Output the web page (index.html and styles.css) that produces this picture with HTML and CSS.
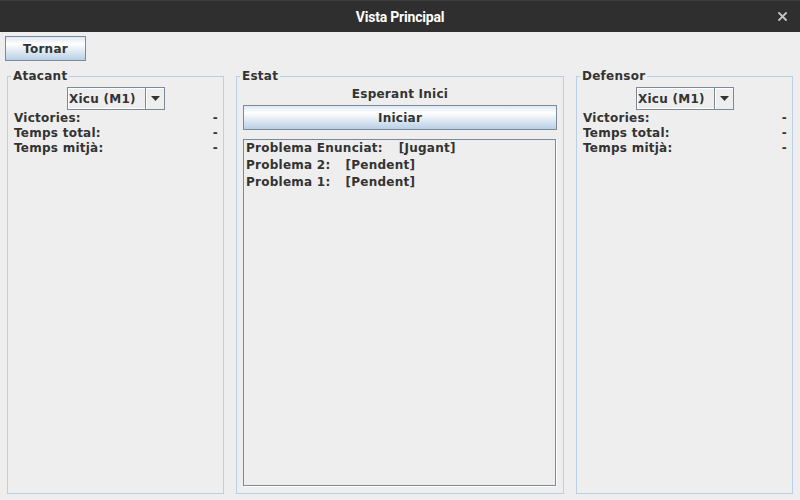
FILE: index.html
```html
<!DOCTYPE html>
<html lang="ca">
<head>
<meta charset="utf-8">
<title>Vista Principal</title>
<link rel="stylesheet" href="styles.css">
</head>
<body>
<div class="window">
  <div class="titlebar">
    <span class="title">Vista Principal</span>
    <span class="close" aria-label="Tancar">
      <svg width="9" height="9" viewBox="0 0 9 9"><path d="M1 1 L8 8 M8 1 L1 8" stroke="#c4c4c4" stroke-width="1.9" stroke-linecap="square" fill="none"/></svg>
    </span>
  </div>
  <div class="main">
    <div class="toolbar">
      <button class="btn btn-back">Tornar</button>
    </div>
    <div class="panels">
      <fieldset class="panel side">
        <legend>Atacant</legend>
        <div class="combo-row">
          <div class="combo">
            <span class="combo-text">Xicu (M1)</span>
            <span class="combo-arrow"><svg width="9" height="5" viewBox="0 0 9 5"><path d="M0 0 H9 L4.5 5 Z" fill="#333"/></svg></span>
          </div>
        </div>
        <div class="stats">
          <div class="stat"><span>Victories:</span><span>-</span></div>
          <div class="stat"><span>Temps total:</span><span>-</span></div>
          <div class="stat"><span>Temps mitjà:</span><span>-</span></div>
        </div>
      </fieldset>
      <fieldset class="panel center">
        <legend>Estat</legend>
        <div class="state">Esperant Inici</div>
        <button class="btn btn-start">Iniciar</button>
        <div class="list">
          <div class="item"><span>Problema Enunciat:</span><span class="status first">[Jugant]</span></div>
          <div class="item"><span>Problema 2:</span><span class="status">[Pendent]</span></div>
          <div class="item"><span>Problema 1:</span><span class="status">[Pendent]</span></div>
        </div>
      </fieldset>
      <fieldset class="panel side">
        <legend>Defensor</legend>
        <div class="combo-row">
          <div class="combo">
            <span class="combo-text">Xicu (M1)</span>
            <span class="combo-arrow"><svg width="9" height="5" viewBox="0 0 9 5"><path d="M0 0 H9 L4.5 5 Z" fill="#333"/></svg></span>
          </div>
        </div>
        <div class="stats">
          <div class="stat"><span>Victories:</span><span>-</span></div>
          <div class="stat"><span>Temps total:</span><span>-</span></div>
          <div class="stat"><span>Temps mitjà:</span><span>-</span></div>
        </div>
      </fieldset>
    </div>
  </div>
</div>
</body>
</html>
```
FILE: styles.css
```css
* { box-sizing: border-box; }
html, body { margin: 0; padding: 0; }
body {
  width: 800px;
  height: 500px;
  overflow: hidden;
  background: #eeeeee;
  font: bold 12px "DejaVu Sans", sans-serif;
  letter-spacing: 0.25px;
  color: #333333;
}
.window {
  display: flex;
  flex-direction: column;
  height: 500px;
}
.titlebar {
  height: 32px;
  flex: none;
  background: #2f2f2f;
  border-top: 1px solid #3c3c3c;
  display: grid;
  grid-template-columns: 1fr auto 1fr;
  align-items: center;
}
.title {
  grid-column: 2;
  color: #ffffff;
  font: 700 14px Roboto, sans-serif;
  letter-spacing: -0.2px;
}
.close {
  justify-self: end;
  margin-right: 13px;
  display: flex;
}
.main {
  flex: 1;
  display: flex;
  flex-direction: column;
  padding: 4px 0 6px 5px;
}
.toolbar { display: flex; }
.btn {
  font: inherit;
  letter-spacing: inherit;
  color: #333333;
  border: 1px solid #7a8a99;
  background: linear-gradient(#dde8f3 0%, #ffffff 30%, #b8cfe5 100%);
  padding: 0;
  height: 25px;
  margin: 0;
}
.btn-back { width: 81px; }
.panels {
  flex: 1;
  display: flex;
  gap: 12px;
  margin-top: 8px;
  margin-left: 2px;
}
.panel {
  margin: 0;
  min-width: 0;
  border: 1px solid #b8cfe5;
  display: flex;
  flex-direction: column;
}
.panel legend {
  margin-left: -3px;
  padding: 0 2px;
  line-height: 14px;
  color: #333333;
}
.side {
  width: 217px;
  flex: none;
  padding: 0 5px 6px 6px;
}
.center {
  width: 328px;
  flex: none;
  padding: 0 6px 7px 6px;
}
.combo-row {
  display: flex;
  justify-content: center;
  margin-top: 4px;
}
.combo {
  width: 98px;
  height: 23px;
  border: 1px solid #7a8a99;
  display: flex;
  background: #eeeeee;
}
.combo-text {
  flex: 1;
  padding-left: 0;
  line-height: 21px;
  border: 1px solid #ffffff;
  border-right: none;
  color: #333333;
}
.combo-arrow {
  width: 19px;
  border-left: 1px solid #7a8a99;
  box-shadow: inset 1px 1px 0 #ffffff;
  display: flex;
  align-items: center;
  justify-content: center;
}
.stats { margin-top: 1px; }
.stat {
  display: flex;
  justify-content: space-between;
  line-height: 15px;
}
.state {
  text-align: center;
  line-height: 20px;
  margin-top: 1px;
}
.btn-start {
  width: 100%;
  margin-top: 1px;
}
.list {
  flex: 1;
  margin-top: 9px;
  border: 1px solid #7a8a99;
  box-shadow: 1px 1px 0 #ffffff;
  width: 313px;
  padding: 0 2px;
  line-height: 17px;
}
.item { white-space: nowrap; }
.status { margin-left: 15px; }
.status.first { margin-left: 16px; }
```
